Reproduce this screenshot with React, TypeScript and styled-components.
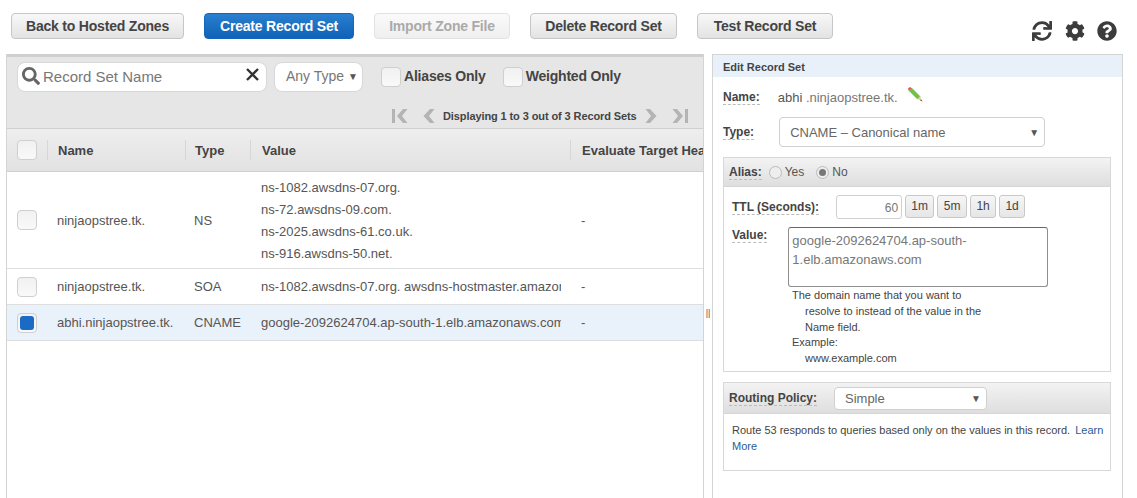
import React from "react";
import styled, { createGlobalStyle } from "styled-components";
import { FaCog, FaQuestionCircle, FaSearch, FaSync } from "react-icons/fa";

const GlobalStyle = createGlobalStyle`
  html, body {
    margin: 0;
    padding: 0;
    background: #fff;
    font-family: "Liberation Sans", Arial, sans-serif;
    color: #444;
  }
  * { box-sizing: border-box; }
`;

const Page = styled.div`
  width: 1137px;
  height: 498px;
  overflow: hidden;
`;

const Toolbar = styled.div`
  display: flex;
  align-items: flex-start;
  height: 54px;
  padding: 13px 20px 0 11px;
`;

const ToolButton = styled.div<{ $w: number; $kind?: "primary" | "disabled" }>`
  width: ${(p) => p.$w}px;
  height: 26px;
  margin-right: 20px;
  padding-bottom: 1px;
  display: flex;
  align-items: center;
  justify-content: center;
  border-radius: 4px;
  font-size: 14px;
  font-weight: bold;
  letter-spacing: -0.2px;
  border: 1px solid ${(p) => (p.$kind === "primary" ? "#1166bb" : p.$kind === "disabled" ? "#e2e2e2" : "#c6c6c6")};
  color: ${(p) => (p.$kind === "primary" ? "#fff" : p.$kind === "disabled" ? "#aaa" : "#444")};
  background: ${(p) =>
    p.$kind === "primary"
      ? "linear-gradient(#2a7fd0, #0f62b5)"
      : p.$kind === "disabled"
      ? "linear-gradient(#fafafa, #efefef)"
      : "linear-gradient(#f8f8f8, #e3e3e3)"};
`;

const ToolIcons = styled.div`
  margin-left: auto;
  margin-top: 8px;
  display: flex;
  gap: 12.5px;
  color: #3c3c3c;
  font-size: 20px;
  line-height: 0;
`;

const Body = styled.div`
  display: flex;
  height: 444px;
  padding-left: 6px;
`;

const LeftPane = styled.div`
  width: 698px;
  border-left: 1px solid #d4d4d4;
  border-right: 1px solid #d4d4d4;
  overflow: hidden;
`;

const Filters = styled.div`
  height: 75px;
  border-top: 3px solid #cfcfcf;
  border-bottom: 1px solid #d0d0d0;
  background: #e6e6e6;
  padding: 5px 0 0 10px;
`;

const FilterRow = styled.div`
  display: flex;
  align-items: center;
`;

const Search = styled.div`
  width: 250px;
  height: 30px;
  display: flex;
  align-items: center;
  background: #fff;
  border: 1px solid #d8d8d8;
  border-radius: 8px;
  padding: 0 6px 2px 4px;
  color: #666;
  font-size: 15px;

  svg:first-child {
    width: 18px;
    height: 18px;
  }
`;

const SearchText = styled.span`
  margin-left: 3px;
  flex: 1;
  color: #777;
`;

const Clear = styled.svg`
  width: 15px;
  height: 15px;
  margin-bottom: 3px;
`;

const TypeFilter = styled.div`
  width: 89px;
  height: 30px;
  margin-left: 7px;
  margin-right: 18px;
  display: flex;
  align-items: center;
  justify-content: space-between;
  background: #fff;
  border: 1px solid #d8d8d8;
  border-radius: 8px;
  padding: 0 4px 2px 11px;
  color: #777;
  font-size: 14px;
`;

const Caret = styled.span`
  font-size: 10px;
  color: #555;
`;

const Box = styled.span<{ $checked?: boolean }>`
  width: 20px;
  height: 20px;
  flex: none;
  display: flex;
  align-items: center;
  justify-content: center;
  border: 1px solid #cfcfcf;
  border-radius: 4px;
  background: linear-gradient(#f1f1f1, #f9f9f9);
  &::after {
    content: "";
    display: ${(p) => (p.$checked ? "block" : "none")};
    width: 14px;
    height: 14px;
    border-radius: 3px;
    background: #1a6ac6;
  }
`;

const FilterCheck = styled.label`
  display: flex;
  align-items: center;
  gap: 3px;
  margin-right: 17px;
  font-size: 14px;
  font-weight: bold;
  letter-spacing: -0.2px;
  color: #444;
`;

const CheckText = styled.span`
  margin-bottom: 3px;
`;

const Pager = styled.div`
  display: flex;
  align-items: center;
  margin-top: 17px;
  padding-left: 375px;
  font-size: 11px;
  font-weight: bold;
  letter-spacing: -0.1px;
  color: #444;
`;

const PagerIcon = styled.svg`
  width: 16px;
  height: 14px;
  flex: none;
  fill: #b4b4b4;
`;

const PagerArrow = styled(PagerIcon)`
  width: 12px;
`;

const PagerText = styled.span`
  margin: 0 8px;
`;

const PagerGap = styled.span`
  width: 15px;
  flex: none;
`;

const Columns = "40px 138px 65px 320px 1fr";

const HeadRow = styled.div`
  display: grid;
  grid-template-columns: ${Columns};
  height: 43px;
  align-items: center;
  background: linear-gradient(#eeeeee, #e2e2e2);
  border-bottom: 1px solid #cfcfcf;
  white-space: nowrap;
`;

const HeadCell = styled.div<{ $pad?: number }>`
  height: 20px;
  line-height: 22px;
  padding-left: ${(p) => p.$pad ?? 11}px;
  font-size: 13px;
  font-weight: bold;
  color: #444;
  border-left: 1px solid #d6d6d6;
  overflow: hidden;
`;

const BoxCell = styled.div`
  padding-left: 10px;
`;

const Row = styled.div<{ $h: number; $selected?: boolean }>`
  display: grid;
  grid-template-columns: ${Columns};
  height: ${(p) => p.$h}px;
  align-items: center;
  border-bottom: 1px solid #dedede;
  background: ${(p) => (p.$selected ? "#e9f1fb" : "#fff")};
  font-size: 13px;
  color: #555;
  white-space: nowrap;
`;

const Cell = styled.div<{ $pad?: number }>`
  padding-left: ${(p) => p.$pad ?? 11}px;
  overflow: hidden;
`;

const ValueCell = styled.div`
  margin-left: 11px;
  margin-right: 9px;
  overflow: hidden;
`;

const ValueList = styled.div`
  margin-top: 2px;
`;

const ValueLine = styled.div`
  height: 22px;
  line-height: 22px;
`;

const Splitter = styled.div`
  width: 8px;
  display: flex;
  align-items: center;
  justify-content: center;
  padding-top: 74px;
  font-size: 9px;
  color: #555;
`;

const RightPane = styled.div`
  width: 411px;
  border: 1px solid #d4d4d4;
  border-bottom: none;
`;

const PaneTitle = styled.div`
  height: 22px;
  line-height: 24px;
  padding-left: 10px;
  background: #e8f1fa;
  font-size: 11px;
  font-weight: bold;
  color: #444;
`;

const Form = styled.div`
  padding: 0 11px 0 10px;
`;

const FormRow = styled.div`
  display: flex;
  align-items: center;
`;

const Label = styled.span<{ $after?: number }>`
  margin-right: ${(p) => p.$after ?? 0}px;
  font-size: 12px;
  font-weight: bold;
  color: #444;
  border-bottom: 1px dashed #bbb;
  white-space: nowrap;
`;

const ValueLabel = styled(Label)`
  margin-top: 1px;
`;

const NameValue = styled.span`
  margin-left: 18px;
  font-size: 13px;
  color: #555;
`;

const Muted = styled.span`
  color: #777;
`;

const Pencil = styled.svg`
  width: 15px;
  height: 15px;
  margin: -7px 0 0 10px;
`;

const Select = styled.div<{ $w: number; $h: number }>`
  width: ${(p) => p.$w}px;
  height: ${(p) => p.$h}px;
  display: flex;
  align-items: center;
  justify-content: space-between;
  background: #fff;
  border: 1px solid #d0d0d0;
  border-radius: 4px;
  padding: 0 5px 0 10px;
  font-size: 13px;
  color: #666;
`;

const Section = styled.div<{ $h: number }>`
  height: ${(p) => p.$h}px;
  border: 1px solid #d8d8d8;
`;

const SectionHead = styled.div<{ $h: number }>`
  height: ${(p) => p.$h}px;
  display: flex;
  align-items: center;
  padding-left: 5px;
  background: linear-gradient(#f3f3f3, #dedede);
  border-bottom: 1px solid #d6d6d6;
`;

const Radio = styled.span<{ $on?: boolean }>`
  width: 13px;
  height: 13px;
  margin-left: 7px;
  margin-right: 3px;
  display: flex;
  align-items: center;
  justify-content: center;
  border: 1px solid #bbb;
  border-radius: 50%;
  background: #eee;
  &::after {
    content: "";
    display: ${(p) => (p.$on ? "block" : "none")};
    width: 7px;
    height: 7px;
    border-radius: 50%;
    background: #777;
  }
`;

const RadioText = styled.span`
  margin-right: 5px;
  font-size: 12px;
  color: #555;
`;

const SectionBody = styled.div`
  padding: 8px 0 0 8px;
`;

const TtlInput = styled.div`
  width: 66px;
  height: 24px;
  margin-left: 17px;
  margin-right: 3px;
  padding-right: 3px;
  line-height: 25px;
  text-align: right;
  border: 1px solid #d0d0d0;
  border-radius: 3px;
  font-size: 12px;
  color: #777;
`;

const TtlButton = styled.div<{ $w: number }>`
  width: ${(p) => p.$w}px;
  height: 23px;
  margin-right: 3px;
  margin-top: -2px;
  line-height: 21px;
  text-align: center;
  border: 1px solid #c8c8c8;
  border-radius: 3px;
  background: linear-gradient(#f6f6f6, #e6e6e6);
  font-size: 12px;
  color: #444;
`;

const ValueRow = styled.div`
  display: flex;
  align-items: flex-start;
  margin-top: 8px;
`;

const ValueBox = styled.div`
  width: 260px;
  height: 60px;
  margin-left: 21px;
  padding: 3px 3px;
  border: 1px solid #8f8f8f;
  border-top-color: #666;
  border-radius: 3px;
  font-size: 13px;
  line-height: 19px;
  color: #777;
`;

const Hint = styled.div`
  margin: 1px 0 0 60px;
  font-size: 11px;
  line-height: 15.8px;
  color: #444;
`;

const HintIndent = styled.div`
  padding-left: 13px;
`;

const RoutingText = styled.div`
  padding: 8px 4px 0 8px;
  font-size: 11px;
  line-height: 16px;
  color: #444;
`;

const LearnLink = styled.a`
  margin-left: 2px;
  color: #2b5b94;
  text-decoration: none;
`;

const Spacer = styled.div<{ $h: number }>`
  height: ${(p) => p.$h}px;
`;

const FirstIcon = () => (
  <PagerIcon viewBox="0 0 16 14">
    <rect x="0" y="0" width="3" height="14" />
    <path d="M11 0 L15.5 0 L10 7 L15.5 14 L11 14 L5 7Z" />
  </PagerIcon>
);

const PrevIcon = () => (
  <PagerArrow viewBox="0 0 12 14">
    <path d="M7 0 L11.5 0 L6 7 L11.5 14 L7 14 L0.5 7Z" />
  </PagerArrow>
);

const NextIcon = () => (
  <PagerArrow viewBox="0 0 12 14">
    <path d="M0.5 0 L5 0 L11.5 7 L5 14 L0.5 14 L6 7Z" />
  </PagerArrow>
);

const LastIcon = () => (
  <PagerIcon viewBox="0 0 16 14">
    <path d="M0.5 0 L5 0 L11 7 L5 14 L0.5 14 L6 7Z" />
    <rect x="13" y="0" width="3" height="14" />
  </PagerIcon>
);

export default function App() {
  return (
    <Page>
      <GlobalStyle />
      <Toolbar>
        <ToolButton $w={173}>Back to Hosted Zones</ToolButton>
        <ToolButton $w={150} $kind="primary">Create Record Set</ToolButton>
        <ToolButton $w={136} $kind="disabled">Import Zone File</ToolButton>
        <ToolButton $w={147}>Delete Record Set</ToolButton>
        <ToolButton $w={136}>Test Record Set</ToolButton>
        <ToolIcons>
          <FaSync />
          <FaCog />
          <FaQuestionCircle />
        </ToolIcons>
      </Toolbar>
      <Body>
        <LeftPane>
          <Filters>
            <FilterRow>
              <Search>
                <FaSearch />
                <SearchText>Record Set Name</SearchText>
                <Clear viewBox="0 0 15 15">
                  <path d="M2 2 L13 13 M13 2 L2 13" stroke="#333" strokeWidth="2.4" />
                </Clear>
              </Search>
              <TypeFilter>
                Any Type <Caret>▼</Caret>
              </TypeFilter>
              <FilterCheck><Box /><CheckText>Aliases Only</CheckText></FilterCheck>
              <FilterCheck><Box /><CheckText>Weighted Only</CheckText></FilterCheck>
            </FilterRow>
            <Pager>
              <FirstIcon />
              <PagerGap />
              <PrevIcon />
              <PagerText>Displaying 1 to 3 out of 3 Record Sets</PagerText>
              <NextIcon />
              <PagerGap />
              <LastIcon />
            </Pager>
          </Filters>
          <HeadRow>
            <BoxCell><Box /></BoxCell>
            <HeadCell $pad={10}>Name</HeadCell>
            <HeadCell $pad={9}>Type</HeadCell>
            <HeadCell>Value</HeadCell>
            <HeadCell>Evaluate Target Health</HeadCell>
          </HeadRow>
          <Row $h={97}>
            <BoxCell><Box /></BoxCell>
            <Cell $pad={10}>ninjaopstree.tk.</Cell>
            <Cell $pad={9}>NS</Cell>
            <ValueCell>
              <ValueList>
                <ValueLine>ns-1082.awsdns-07.org.</ValueLine>
                <ValueLine>ns-72.awsdns-09.com.</ValueLine>
                <ValueLine>ns-2025.awsdns-61.co.uk.</ValueLine>
                <ValueLine>ns-916.awsdns-50.net.</ValueLine>
              </ValueList>
            </ValueCell>
            <Cell>-</Cell>
          </Row>
          <Row $h={36}>
            <BoxCell><Box /></BoxCell>
            <Cell $pad={10}>ninjaopstree.tk.</Cell>
            <Cell $pad={9}>SOA</Cell>
            <ValueCell>ns-1082.awsdns-07.org. awsdns-hostmaster.amazon.com.</ValueCell>
            <Cell>-</Cell>
          </Row>
          <Row $h={36} $selected>
            <BoxCell><Box $checked /></BoxCell>
            <Cell $pad={10}>abhi.ninjaopstree.tk.</Cell>
            <Cell $pad={9}>CNAME</Cell>
            <ValueCell>google-2092624704.ap-south-1.elb.amazonaws.com</ValueCell>
            <Cell>-</Cell>
          </Row>
        </LeftPane>
        <Splitter>||</Splitter>
        <RightPane>
          <PaneTitle>Edit Record Set</PaneTitle>
          <Form>
            <Spacer $h={13} />
            <FormRow>
              <Label>Name:</Label>
              <NameValue>abhi <Muted>.ninjaopstree.tk.</Muted></NameValue>
              <Pencil viewBox="0 0 15 15">
                <path d="M1 3.5 L3.5 1 L12 9.5 L9.5 12Z" fill="#6cc644" stroke="#4c9a2c" strokeWidth="0.5" />
                <path d="M1 3.5 L3.5 1 L2.6 0.3 Q1.4 0 0.4 1 Q0 2 0.3 2.8Z" fill="#d9534f" />
                <path d="M9.5 12 L12 9.5 L14.5 14.5Z" fill="#e8c98a" />
                <path d="M13 12.4 L14.5 14.5 L12.2 13.5Z" fill="#444" />
              </Pencil>
            </FormRow>
            <Spacer $h={12} />
            <FormRow>
              <Label $after={25}>Type:</Label>
              <Select $w={266} $h={30}>
                CNAME – Canonical name <Caret>▼</Caret>
              </Select>
            </FormRow>
            <Spacer $h={10} />
            <Section $h={215}>
              <SectionHead $h={29}>
                <Label>Alias:</Label>
                <Radio />
                <RadioText>Yes</RadioText>
                <Radio $on />
                <RadioText>No</RadioText>
              </SectionHead>
              <SectionBody>
                <FormRow>
                  <Label>TTL (Seconds):</Label>
                  <TtlInput>60</TtlInput>
                  <TtlButton $w={29}>1m</TtlButton>
                  <TtlButton $w={30}>5m</TtlButton>
                  <TtlButton $w={26}>1h</TtlButton>
                  <TtlButton $w={26}>1d</TtlButton>
                </FormRow>
                <ValueRow>
                  <ValueLabel>Value:</ValueLabel>
                  <ValueBox>google-2092624704.ap-south-1.elb.amazonaws.com</ValueBox>
                </ValueRow>
                <Hint>
                  The domain name that you want to
                  <HintIndent>resolve to instead of the value in the</HintIndent>
                  <HintIndent>Name field.</HintIndent>
                  Example:
                  <HintIndent>www.example.com</HintIndent>
                </Hint>
              </SectionBody>
            </Section>
            <Spacer $h={10} />
            <Section $h={89}>
              <SectionHead $h={31}>
                <Label $after={17}>Routing Policy:</Label>
                <Select $w={153} $h={23}>
                  Simple <Caret>▼</Caret>
                </Select>
              </SectionHead>
              <RoutingText>
                Route 53 responds to queries based only on the values in this record.{" "}
                <LearnLink>Learn More</LearnLink>
              </RoutingText>
            </Section>
          </Form>
        </RightPane>
      </Body>
    </Page>
  );
}
